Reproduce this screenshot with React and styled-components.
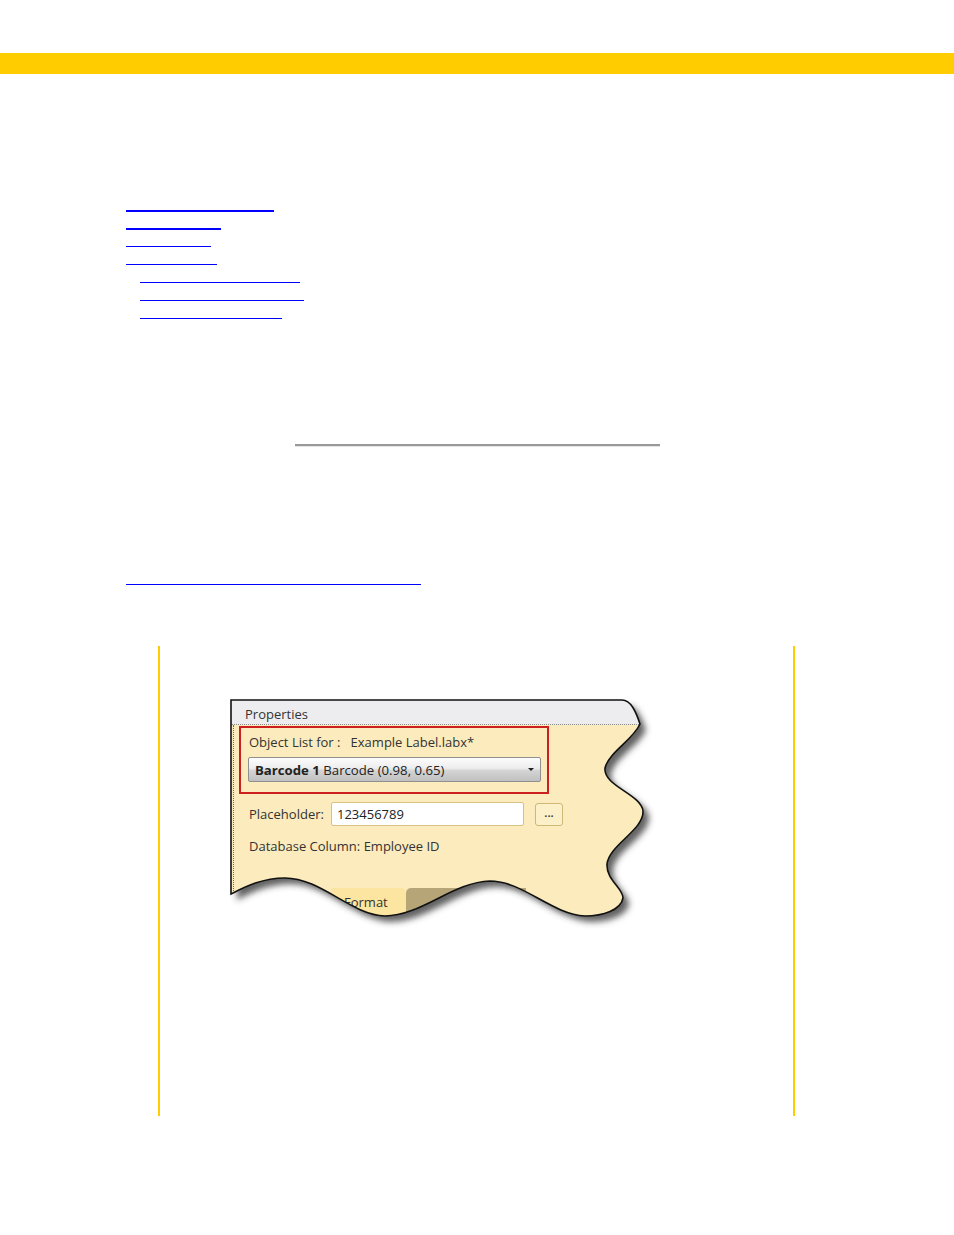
import React from 'react';
import styled, { createGlobalStyle } from 'styled-components';

const Global = createGlobalStyle`
  html, body { margin: 0; padding: 0; background: #fff; }
  body { font-family: "Liberation Sans", Arial, sans-serif; }
`;

// torn-edge outline of the screenshot, in panel coords
const WAVE = 'M0,0 H391 C400,0 405,12 409,24 C402,40 378,52 374,68 C372,86 410,94 412,111 C413,130 378,145 376,164 C375,180 392,188 392,198 C390,210 372,216 354,216 C320,214 292,181 259,181 C222,182 190,216 154,216 C120,215 90,178 54,178 C30,178 12,188 0,194 Z';

const links = [
  { w: 148, t: 2, indent: 0 },
  { w: 95, t: 2, indent: 0 },
  { w: 85, t: 1, indent: 0 },
  { w: 91, t: 1, indent: 0 },
  { w: 160, t: 1, indent: 14 },
  { w: 164, t: 1, indent: 14 },
  { w: 142, t: 1, indent: 14 },
];

export default function App() {
  return (
    <Page>
      <Global />
      <TopBar />
      <LinkList>
        {links.map((l, i) => (
          <Link key={i} href="#" $w={l.w} $t={l.t} $indent={l.indent} />
        ))}
      </LinkList>
      <Rule />
      <WideLink href="#" />
      <Section>
        <Panel>
          <Backdrop viewBox="0 0 430 235" width="430" height="235">
            <defs>
              <filter id="torn" x="-10%" y="-10%" width="130%" height="130%">
                <feDropShadow dx="6" dy="6" stdDeviation="3" floodColor="#3a3a3a" floodOpacity="0.8" />
              </filter>
            </defs>
            <path d={WAVE} fill="#fbebbd" filter="url(#torn)" />
          </Backdrop>
          <Content>
            <Header>Properties</Header>
            <Body>
              <RedBox>
                <Label>Object List for :&nbsp;&nbsp; Example Label.labx*</Label>
                <Dropdown>
                  <span><b>Barcode 1</b> Barcode (0.98, 0.65)</span>
                  <Caret />
                </Dropdown>
              </RedBox>
              <FieldRow>
                <Label $w={82}>Placeholder:</Label>
                <Input>123456789</Input>
                <Dots>...</Dots>
              </FieldRow>
              <DbLine>Database Column: Employee ID</DbLine>
              <Tabs>
                <Tab>Format</Tab>
                <Tab $dark />
              </Tabs>
            </Body>
          </Content>
          <Outline viewBox="0 0 430 235" width="430" height="235">
            <path d={WAVE} fill="none" stroke="#111" strokeWidth="1.6" />
          </Outline>
        </Panel>
      </Section>
    </Page>
  );
}

const Page = styled.div`
  width: 954px;
  min-height: 1235px;
  padding-top: 53px;
`;

const TopBar = styled.div`
  height: 21px;
  background: #ffcc00;
`;

const LinkList = styled.div`
  padding: 120px 0 0 126px;
`;

const Link = styled.a`
  display: block;
  width: ${p => p.$w}px;
  height: 16px;
  margin-left: ${p => p.$indent}px;
  margin-bottom: ${p => 2 - p.$t}px;
  border-bottom: ${p => p.$t}px solid #0000ff;
`;

const Rule = styled.div`
  width: 365px;
  height: 2px;
  margin: 125px auto 0;
  background: #9a9a9a;
  box-shadow: 0 1px 0 #e4e4e4;
`;

const WideLink = styled.a`
  display: block;
  width: 295px;
  height: 138px;
  margin-left: 126px;
  border-bottom: 1px solid #0000ff;
`;

const Section = styled.div`
  width: 637px;
  height: 470px;
  margin: 61px 0 0 158px;
  padding: 54px 0 0 71px;
  box-sizing: border-box;
  border-left: 2px solid #ffcc00;
  border-right: 2px solid #ffcc00;
`;

const Panel = styled.div`
  position: relative;
  width: 430px;
  height: 235px;
  font-family: "Open Sans", "Noto Sans", sans-serif;
  font-size: 13px;
  color: #333;
`;

const Backdrop = styled.svg`
  position: absolute;
  left: 0;
  top: 0;
  overflow: visible;
`;

const Outline = styled.svg`
  position: absolute;
  left: 0;
  top: 0;
  overflow: visible;
  pointer-events: none;
`;

const Content = styled.div`
  position: relative;
  height: 235px;
  clip-path: path('${WAVE}');
`;

const Header = styled.div`
  height: 24px;
  line-height: 28px;
  padding-left: 14px;
  background: #ededf0;
  border-bottom: 1px dotted #8a8a8a;
  color: #333;
`;

const Body = styled.div`
  display: flex;
  flex-direction: column;
  align-items: flex-start;
  height: 210px;
  margin-left: 2px;
  padding-left: 15px;
  border-left: 1px dotted #6a6a6a;
`;

const RedBox = styled.div`
  width: 310px;
  height: 68px;
  margin: 1px 0 0 -10px;
  padding: 6px 0 0 8px;
  box-sizing: border-box;
  border: 2px solid #cc1f1f;
`;

const Label = styled.div`
  width: ${p => (p.$w ? `${p.$w}px` : 'auto')};
  flex-shrink: 0;
  line-height: 16px;
  white-space: nowrap;
`;

const Dropdown = styled.div`
  display: flex;
  align-items: center;
  justify-content: space-between;
  width: 293px;
  height: 25px;
  margin: 7px 0 0 -1px;
  padding: 0 6px;
  box-sizing: border-box;
  border: 1px solid #8f8f8f;
  border-radius: 2px;
  background: linear-gradient(#fdfdfd, #ececec 45%, #d4d4d4 55%, #c0c0c0);
  color: #222;
  font-size: 13.2px;
  b { font-weight: 700; }
`;

const Caret = styled.i`
  width: 0;
  height: 0;
  border-left: 3px solid transparent;
  border-right: 3px solid transparent;
  border-top: 3px solid #222;
`;

const FieldRow = styled.div`
  display: flex;
  align-items: center;
  height: 24px;
  margin-top: 8px;
`;

const Input = styled.div`
  width: 193px;
  height: 24px;
  padding-left: 5px;
  box-sizing: border-box;
  line-height: 22px;
  background: #fff;
  border: 1px solid #d8c282;
  border-radius: 2px;
  color: #222;
`;

const Dots = styled.div`
  width: 28px;
  height: 23px;
  margin-left: 11px;
  box-sizing: border-box;
  border: 1px solid #cdb877;
  border-radius: 3px;
  background: #fcf0c8;
  text-align: center;
  line-height: 18px;
  font-size: 11px;
  font-weight: 700;
  color: #444;
`;

const DbLine = styled.div`
  line-height: 16px;
  margin-top: 12px;
`;

const Tabs = styled.div`
  display: flex;
  margin: 34px 0 0 82px;
`;

const Tab = styled.div`
  width: ${p => (p.$dark ? 120 : 75)}px;
  height: 36px;
  padding-left: 13px;
  box-sizing: border-box;
  line-height: 28px;
  color: #333;
  background: ${p => (p.$dark ? '#b6a677' : '#fce5a0')};
  border-radius: ${p => (p.$dark ? '5px 0 0 0' : '0 5px 0 0')};
`;
